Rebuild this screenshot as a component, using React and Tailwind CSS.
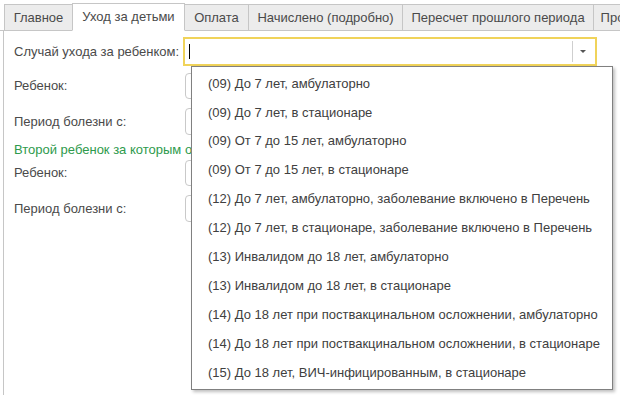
import React from 'react';

const tabs = [
  { label: 'Главное', w: 'w-[69px]' },
  { label: 'Уход за детьми', w: 'w-[113px]', active: true },
  { label: 'Оплата', w: 'w-[65px]' },
  { label: 'Начислено (подробно)', w: 'w-[155px]' },
  { label: 'Пересчет прошлого периода', w: 'w-[192px]' },
  { label: 'Прочее', w: 'w-[60px]' },
];

const options = [
  '(09) До 7 лет, амбулаторно',
  '(09) До 7 лет, в стационаре',
  '(09) От 7 до 15 лет, амбулаторно',
  '(09) От 7 до 15 лет, в стационаре',
  '(12) До 7 лет, амбулаторно, заболевание включено в Перечень',
  '(12) До 7 лет, в стационаре, заболевание включено в Перечень',
  '(13) Инвалидом до 18 лет, амбулаторно',
  '(13) Инвалидом до 18 лет, в стационаре',
  '(14) До 18 лет при поствакцинальном осложнении, амбулаторно',
  '(14) До 18 лет при поствакцинальном осложнении, в стационаре',
  '(15) До 18 лет, ВИЧ-инфицированным, в стационаре',
];

function Field({ label, className }) {
  return (
    <div className={`flex items-center ${className}`}>
      <div className="w-[171px] shrink-0">{label}</div>
      <div className="h-full w-[412px] rounded-[4px] border border-[#c9c9c9] bg-white" />
    </div>
  );
}

export default function App() {
  return (
    <div className="relative w-[620px] h-[395px] overflow-hidden bg-white text-[13px] text-[#4a4a4a] font-['Liberation_Sans',Arial,sans-serif]">
      {/* Tabs */}
      <div className="flex items-end h-[31px] pl-[4px] border-b border-[#c6c6c6]">
        {tabs.map((t) => (
          <div
            key={t.label}
            className={`${t.w} shrink-0 flex items-center justify-center border border-[#c6c6c6] -ml-px first:ml-0 ${
              t.active ? 'h-[28px] bg-white border-b-white -mb-px' : 'h-[26px] bg-[#ececec] border-b-0'
            }`}
          >
            {t.label}
          </div>
        ))}
      </div>

      {/* Panel */}
      <div className="ml-[3px] h-[364px] border-l border-[#c6c6c6] pl-[10px] flex flex-col">
        <div className="mt-[6px] h-[29px] flex items-center">
          <div className="w-[169px] shrink-0">Случай ухода за ребенком:</div>
          <div className="h-full w-[414px] border-2 border-[#f0d35a] bg-white flex items-center">
            <div className="ml-[4px] w-px h-[15px] bg-black" />
            <div className="ml-auto mr-[2px] h-[21px] w-[21px] border-l border-[#cfcfcf] flex items-center justify-center">
              <div className="w-0 h-0 border-l-[3px] border-r-[3px] border-t-[3px] border-l-transparent border-r-transparent border-t-[#555]" />
            </div>
          </div>
        </div>
        <Field label="Ребенок:" className="mt-[7px] h-[26px]" />
        <Field label="Период болезни с:" className="mt-[9px] h-[27px]" />
        {/* the list covers the rest of this caption */}
        <div className="mt-[7px] h-[16px] w-[177px] overflow-hidden leading-[16px] text-[#2e9a4c] whitespace-nowrap">
          Второй ребенок за которым осуществляется уход
        </div>
        <Field label="Ребенок:" className="mt-[2px] h-[26px]" />
        <Field label="Период болезни с:" className="mt-[9px] h-[27px]" />
      </div>

      {/* Dropdown list */}
      <div className="absolute left-[191px] top-[66px] w-[422px] h-[324px] border border-[#808080] bg-white pt-[2px] shadow-[2px_2px_3px_rgba(0,0,0,0.25)]">
        {options.map((o) => (
          <div key={o} className="h-[28.9px] flex items-center pl-[16px] text-[#404040] whitespace-nowrap">
            {o}
          </div>
        ))}
      </div>
    </div>
  );
}
